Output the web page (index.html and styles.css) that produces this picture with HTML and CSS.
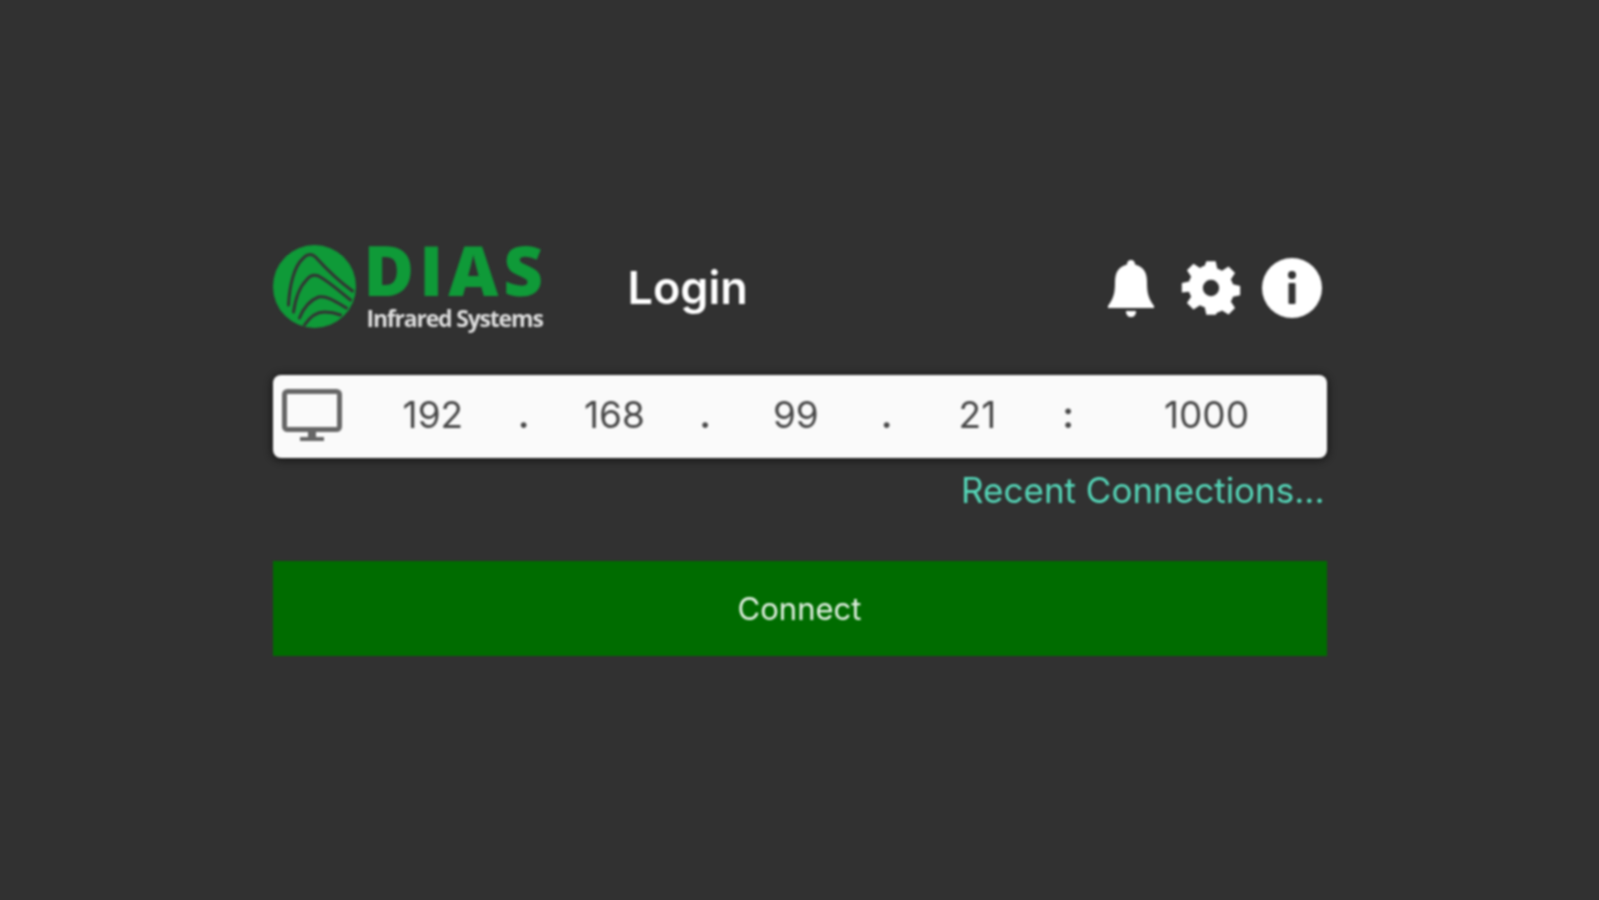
FILE: index.html
```html
<!DOCTYPE html>
<html lang="en">
<head>
    <meta charset="UTF-8">
    <meta name="viewport" content="width=device-width, initial-scale=1.0">
    <title>Login</title>
    <link rel="stylesheet" href="styles.css">
</head>
<body>
    <main class="login">
        <header class="top-bar">
            <div class="logo">
                <svg class="logo-mark" viewBox="4.5 5 83 83" aria-hidden="true">
                    <circle cx="46" cy="46.5" r="41.5" fill="#0f9a38"/>
                    <g fill="none" stroke="#333" stroke-width="3" stroke-linecap="round">
                        <path d="M20 65C21 45 26 26 34 19C38 14 43 13 47 17C56 27 70 41 84 51"/>
                        <path d="M25 72C27 58 32 46 38 40C41 36 45 34 50 36C61 42 72 52 82 60"/>
                        <path d="M31 78C35 68 42 60 50 57C58 55 68 62 78 68"/>
                        <path d="M36 85C42 76 48 72 56 72C62 72 67 73 72 75"/>
                    </g>
                </svg>
                <div class="logo-text">
                    <span class="logo-name">DIAS</span>
                    <span class="logo-sub">Infrared Systems</span>
                </div>
            </div>
            <h1 class="title">Login</h1>
            <div class="actions">
                <svg class="icon icon-bell" viewBox="0 0 46 58" aria-hidden="true">
                    <path fill="#fff" d="M23 1c2.500 0 4 1.500 4 4.500C35 7.500 39 13 39 23c0 10 1 16 7 24v2H0v-2c6-8 7-14 7-24C7 13 11 7.500 19 5.500 19 2.500 20.500 1 23 1z"/>
                    <path fill="#fff" d="M18 52h10c0 4-2 6-5 6s-5-2-5-6z"/>
                </svg>
                <svg class="icon icon-gear" viewBox="0 0 24 24" aria-hidden="true">
                    <path fill="#fff" fill-rule="evenodd" d="M10 .5h4l.7 3.200c.7.2 1.400.5 2 .9l2.800-1.800 2.800 2.800-1.800 2.800c.4.600.7 1.300.9 2l3.100.7v4l-3.100.7c-.2.700-.5 1.400-.9 2l1.800 2.800-2.800 2.800-2.800-1.800c-.6.400-1.300.7-2 .9L14 23.500h-4l-.7-3.200c-.7-.2-1.400-.5-2-.9l-2.800 1.800-2.800-2.800 1.800-2.800c-.4-.6-.7-1.300-.9-2L-.5 13.900v-4l3.100-.7c.2-.7.500-1.400.9-2L1.700 4.400l2.800-2.800 2.800 1.800c.6-.4 1.300-.7 2-.9L10 .5zM12 8.500a3.500 3.500 0 1 0 0 7 3.500 3.500 0 0 0 0-7z"/>
                </svg>
                <svg class="icon icon-info" viewBox="0 0 60 60" aria-hidden="true">
                    <circle cx="30" cy="30" r="30" fill="#fff"/>
                    <circle cx="30" cy="17" r="4" fill="#333"/>
                    <rect x="26.500" y="25" width="7" height="21" rx="1" fill="#333"/>
                </svg>
            </div>
        </header>

        <div class="address">
            <svg class="monitor" viewBox="0 0 60 56" aria-hidden="true">
                <rect x="2.500" y="2.500" width="55" height="38" rx="3" fill="none" stroke="#666" stroke-width="5"/>
                <path fill="#666" d="M26 42h8v6h-8zM18 48h24v4H18z"/>
            </svg>
            <span class="cell">192</span>
            <span class="cell sep">.</span>
            <span class="cell">168</span>
            <span class="cell sep">.</span>
            <span class="cell">99</span>
            <span class="cell sep">.</span>
            <span class="cell">21</span>
            <span class="cell sep">:</span>
            <span class="cell">1000</span>
        </div>

        <a class="recent" href="#">Recent Connections...</a>

        <button class="connect">Connect</button>
    </main>
</body>
</html>
```

FILE: styles.css
```css
body {
    margin: 0;
    min-height: 900px;
    background: #313131;
    font-family: Inter, "Liberation Sans", sans-serif;
    overflow: hidden;
}
.login {
    width: 1054px;
    margin: 0 auto;
    padding-top: 245px;
    filter: blur(0.9px);
}
.top-bar {
    display: flex;
    align-items: center;
    height: 85px;
}
.logo {
    display: flex;
    width: 270px;
    gap: 8px;
}
.logo-mark {
    width: 83px;
    height: 83px;
    flex-shrink: 0;
}
.logo-text {
    display: flex;
    flex-direction: column;
    width: 176px;
}
.logo-name {
    font-family: "Open Sans", sans-serif;
    font-weight: 800;
    font-size: 69px;
    line-height: 49px;
    letter-spacing: 5px;
    color: #0f9a38;
}
.logo-sub {
    margin-top: 12px;
    padding-left: 3px;
    font-family: "Open Sans", sans-serif;
    font-weight: 700;
    font-size: 23px;
    line-height: 24px;
    letter-spacing: -1.2px;
    white-space: nowrap;
    color: #ddd;
}
.title {
    margin: 0 0 0 85px;
    font-size: 45px;
    font-weight: 600;
    color: #fff;
}
.actions {
    display: flex;
    align-items: center;
    margin-left: auto;
    margin-right: 5px;
}
.icon {
    display: block;
    overflow: visible;
}
.icon-bell {
    width: 46px;
    height: 58px;
    margin-right: 29px;
}
.icon-gear {
    width: 56px;
    height: 56px;
    margin-right: 23px;
}
.icon-info {
    width: 60px;
    height: 60px;
}
.address {
    display: grid;
    grid-template-columns: 115px repeat(8, 90.75px) 186px;
    align-items: center;
    height: 83px;
    margin-top: 45px;
    background: #fafafa;
    border-radius: 8px;
    box-shadow: 0 1px 6px 2px #1a1a1a;
    color: #484848;
    font-size: 37px;
}
.monitor {
    width: 60px;
    height: 56px;
    margin-left: 9px;
}
.cell {
    padding-bottom: 4px;
    text-align: center;
}
.sep {
    font-weight: 600;
}
.recent {
    display: block;
    margin-top: 14px;
    padding-right: 2px;
    text-align: right;
    font-size: 35px;
    line-height: 36px;
    color: #55d6b8;
    text-decoration: none;
}
.connect {
    display: block;
    width: 100%;
    height: 95px;
    margin-top: 53px;
    border: none;
    background: #006c00;
    color: #e4f2e4;
    font-family: inherit;
    font-size: 31px;
    cursor: pointer;
}
```
